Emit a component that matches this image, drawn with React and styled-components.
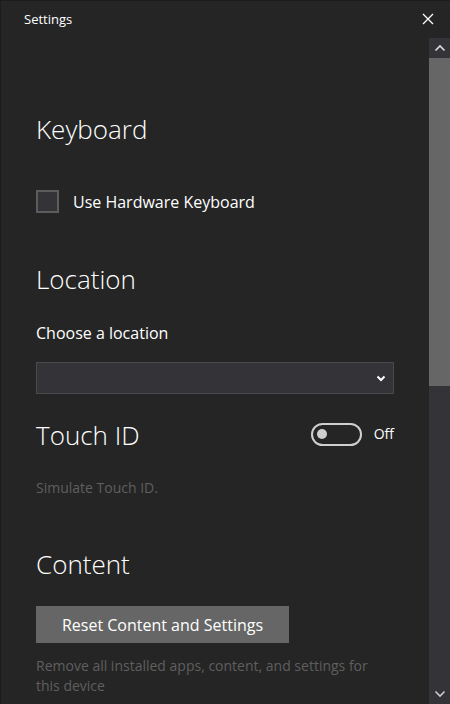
import styled, { createGlobalStyle } from "styled-components";

const GlobalStyle = createGlobalStyle`
  html, body {
    margin: 0;
    padding: 0;
    background: #252525;
  }
  body {
    font-family: "Open Sans", "Noto Sans", sans-serif;
    color: #ffffff;
  }
`;

export default function App() {
  return (
    <Window>
      <GlobalStyle />
      <TitleBar>
        <Title>Settings</Title>
        <CloseButton aria-label="Close">
          <svg width="12" height="12" viewBox="0 0 12 12">
            <path d="M1 1 L11 11 M11 1 L1 11" stroke="#fff" strokeWidth="1.3" />
          </svg>
        </CloseButton>
      </TitleBar>
      <Body>
        <Content>
          <Heading>Keyboard</Heading>
          <CheckRow>
            <CheckBox />
            <Label>Use Hardware Keyboard</Label>
          </CheckRow>

          <Heading $top={50}>Location</Heading>
          <FieldLabel>Choose a location</FieldLabel>
          <Select>
            <svg width="10" height="7" viewBox="0 0 10 7">
              <path d="M1.5 1.5 L5 5 L8.5 1.5" stroke="#fff" strokeWidth="2" fill="none" />
            </svg>
          </Select>

          <ToggleRow>
            <Heading $top={0}>Touch ID</Heading>
            <ToggleGroup>
              <Toggle>
                <Knob />
              </Toggle>
              <ToggleText>Off</ToggleText>
            </ToggleGroup>
          </ToggleRow>
          <Hint $top={27}>Simulate Touch ID.</Hint>

          <Heading $top={50}>Content</Heading>
          <ResetButton>Reset Content and Settings</ResetButton>
          <Hint $top={13}>
            Remove all installed apps, content, and settings for this device
          </Hint>
        </Content>
        <ScrollBar>
          <ScrollArrow>
            <svg width="12" height="8" viewBox="0 0 12 8">
              <path d="M1.5 6.5 L6 2 L10.5 6.5" stroke="#ddd" strokeWidth="1.6" fill="none" />
            </svg>
          </ScrollArrow>
          <Thumb />
          <Track />
          <ScrollArrow>
            <svg width="12" height="8" viewBox="0 0 12 8">
              <path d="M1.5 1.5 L6 6 L10.5 1.5" stroke="#ccc" strokeWidth="1.6" fill="none" />
            </svg>
          </ScrollArrow>
        </ScrollBar>
      </Body>
    </Window>
  );
}

const Window = styled.div`
  width: 450px;
  height: 704px;
  display: flex;
  flex-direction: column;
  background: #252525;
  border-left: 1px solid #1c1c1c;
  border-top: 1px solid #1c1c1c;
  box-sizing: border-box;
  overflow: hidden;
`;

const TitleBar = styled.div`
  height: 37px;
  display: flex;
  align-items: center;
  justify-content: space-between;
  padding: 0 16px 0 23px;
  flex-shrink: 0;
`;

const Title = styled.span`
  font-size: 13px;
  margin-top: -1px;
`;

const CloseButton = styled.div`
  display: flex;
  width: 12px;
  height: 12px;
  margin-top: -1px;
`;

const Body = styled.div`
  flex: 1;
  display: flex;
  min-height: 0;
`;

const Content = styled.div`
  flex: 1;
  padding: 75px 35px 0 35px;
  display: flex;
  flex-direction: column;
  align-items: stretch;
`;

const Heading = styled.h2`
  margin: ${(p) => (p.$top ?? 0)}px 0 0;
  font-size: 26px;
  font-weight: 300;
  line-height: 32px;
`;

const CheckRow = styled.div`
  margin-top: 45px;
  display: flex;
  align-items: center;
  gap: 14px;
`;

const CheckBox = styled.div`
  width: 19px;
  height: 19px;
  border: 2px solid #5c5c5c;
  background: #333338;
`;

const Label = styled.span`
  font-size: 16px;
  line-height: 20px;
`;

const FieldLabel = styled.div`
  margin-top: 28px;
  font-size: 16px;
  line-height: 20px;
`;

const Select = styled.div`
  margin-top: 19px;
  height: 30px;
  border: 1px solid #4a4a4e;
  background: #333338;
  display: flex;
  align-items: center;
  justify-content: flex-end;
  padding-right: 7px;
`;

const ToggleRow = styled.div`
  margin-top: 25px;
  display: flex;
  align-items: center;
  justify-content: space-between;
`;

const ToggleGroup = styled.div`
  display: flex;
  align-items: center;
  gap: 12px;
`;

const Toggle = styled.div`
  width: 43px;
  height: 19px;
  border: 2px solid #cfcfcf;
  border-radius: 12px;
  display: flex;
  align-items: center;
  padding-left: 4px;
  box-sizing: content-box;
  margin-top: -2px;
`;

const Knob = styled.div`
  width: 10px;
  height: 10px;
  border-radius: 50%;
  background: #cfcfcf;
`;

const ToggleText = styled.span`
  font-size: 14px;
  margin-top: -3px;
`;

const Hint = styled.div`
  margin-top: ${(p) => p.$top}px;
  font-size: 14px;
  line-height: 20px;
  color: #5f5f5f;
`;

const ResetButton = styled.button`
  margin-top: 26px;
  align-self: flex-start;
  width: 253px;
  height: 37px;
  border: 0;
  background: #666666;
  color: #ffffff;
  font-family: inherit;
  font-size: 16px;
  padding: 0;
`;

const ScrollBar = styled.div`
  width: 21px;
  display: flex;
  flex-direction: column;
  background: #333338;
`;

const ScrollArrow = styled.div`
  height: 20px;
  display: flex;
  align-items: center;
  justify-content: center;
  flex-shrink: 0;
`;

const Thumb = styled.div`
  height: 328px;
  background: #666666;
`;

const Track = styled.div`
  flex: 1;
`;
